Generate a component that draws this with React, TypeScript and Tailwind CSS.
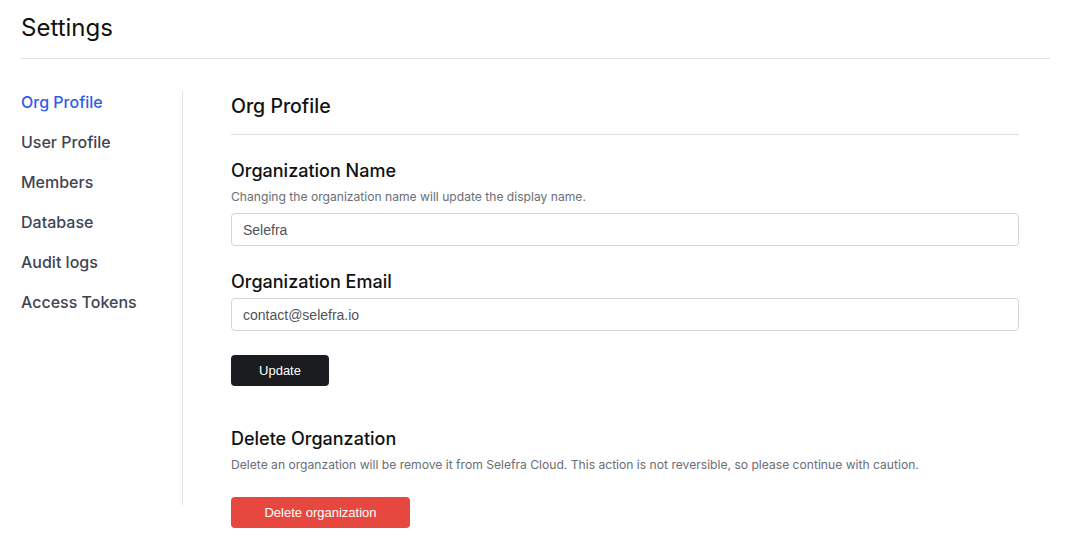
import React from "react";

const navItems = ["Org Profile", "User Profile", "Members", "Database", "Audit logs", "Access Tokens"];

export default function App() {
  return (
    <div className="w-[1072px] h-[555px] bg-white overflow-hidden font-['Inter',sans-serif] pl-[21px] pr-[22px]">
      <div className="pt-[12px] pb-[14px] border-b border-[#e0e0e0]">
        <h1 className="text-[24px] leading-[32px] text-[#111111] font-normal">Settings</h1>
      </div>
      <div className="flex pt-[32px]">
        <nav className="w-[162px] h-[414px] border-r border-[#e3e3e3] flex flex-col gap-4">
          {navItems.map((item, i) => (
            <a
              key={item}
              className={
                i === 0
                  ? "-mt-[1px] text-[16px] leading-6 font-medium text-[#2f5ce8]"
                  : "text-[16px] leading-6 font-medium text-[#3f4452]"
              }
            >
              {item}
            </a>
          ))}
        </nav>
        <main className="flex-1 pl-[48px] pr-[31px]">
          <div className="border-b border-[#e0e0e0] pb-[14px]">
            <h2 className="mt-[1px] text-[19.5px] leading-7 font-medium text-[#111111]">Org Profile</h2>
          </div>
          <section className="mt-[22px]">
            <h3 className="text-[18px] leading-7 font-medium text-[#111111]">Organization Name</h3>
            <p className="mt-1 text-[12.12px] leading-4 text-[#6b6e75]">
              Changing the organization name will update the display name.
            </p>
            <input
              defaultValue="Selefra"
              className="mt-[8px] w-full h-[33px] rounded-[4px] border border-[#d4d4d8] px-[11px] text-[14px] text-[#50535a] font-['Liberation_Sans',Arial,sans-serif] outline-none"
            />
          </section>
          <section className="mt-[22px]">
            <h3 className="text-[18px] leading-7 font-medium text-[#111111]">Organization Email</h3>
            <input
              defaultValue="contact@selefra.io"
              className="mt-[2px] w-full h-[33px] rounded-[4px] border border-[#d4d4d8] px-[11px] text-[14px] text-[#50535a] font-['Liberation_Sans',Arial,sans-serif] outline-none"
            />
          </section>
          <button className="mt-[24px] w-[98px] h-[31px] rounded-[4px] bg-[#1b1c20] text-white text-[13px] font-['Liberation_Sans',Arial,sans-serif]">
            Update
          </button>
          <section className="mt-[39px]">
            <h3 className="text-[18px] leading-7 font-medium text-[#111111]">Delete Organzation</h3>
            <p className="mt-1 text-[12.12px] leading-4 text-[#6b6e75]">
              Delete an organzation will be remove it from Selefra Cloud. This action is not reversible, so please continue with caution.
            </p>
            <button className="mt-[24px] w-[179px] h-[31px] rounded-[4px] bg-[#e64840] text-white text-[13px] font-['Liberation_Sans',Arial,sans-serif]">
              Delete organization
            </button>
          </section>
        </main>
      </div>
    </div>
  );
}
